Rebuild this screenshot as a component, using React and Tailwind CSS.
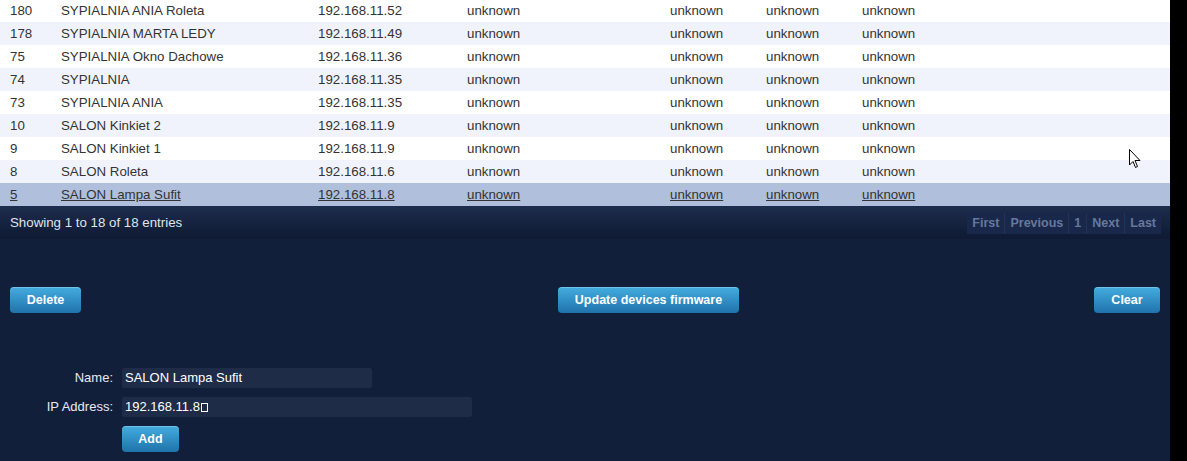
const rows = [
    { id: "180", name: "SYPIALNIA ANIA Roleta", ip: "192.168.11.52" },
    { id: "178", name: "SYPIALNIA MARTA LEDY", ip: "192.168.11.49" },
    { id: "75", name: "SYPIALNIA Okno Dachowe", ip: "192.168.11.36" },
    { id: "74", name: "SYPIALNIA", ip: "192.168.11.35" },
    { id: "73", name: "SYPIALNIA ANIA", ip: "192.168.11.35" },
    { id: "10", name: "SALON Kinkiet 2", ip: "192.168.11.9" },
    { id: "9", name: "SALON Kinkiet 1", ip: "192.168.11.9" },
    { id: "8", name: "SALON Roleta", ip: "192.168.11.6" },
    { id: "5", name: "SALON Lampa Sufit", ip: "192.168.11.8", selected: true },
];

const btn =
    "h-[26px] rounded-[4px] bg-gradient-to-b from-[#44ade0] to-[#1f73ab] text-white font-bold text-[12.5px] shadow-[inset_0_1px_0_rgba(255,255,255,0.25)]";

export default function App() {
    return (
        <div className="flex w-[1187px] h-[461px] overflow-hidden bg-black font-['Liberation_Sans',Arial,sans-serif]">
            <div className="relative w-[1170px] h-full bg-[#121f3b]">
                <div className="-mt-px">
                    {rows.map((r, i) => (
                        <div
                            key={r.id}
                            className={
                                "flex h-[23px] items-center text-[13.3px] text-[#333] " +
                                (r.selected
                                    ? "bg-[#b0bfdb] underline"
                                    : i % 2
                                    ? "bg-[#f1f3fc]"
                                    : "bg-white")
                            }
                        >
                            <span className="w-[61px] pl-[10px]">{r.id}</span>
                            <span className="w-[257px]">{r.name}</span>
                            <span className="w-[149px]">{r.ip}</span>
                            <span className="w-[203px]">unknown</span>
                            <span className="w-[96px]">unknown</span>
                            <span className="w-[96px]">unknown</span>
                            <span>unknown</span>
                        </div>
                    ))}
                </div>
                <div className="flex h-[33px] items-center justify-between px-[10px] pt-px bg-gradient-to-b from-[#1d2d4d] to-[#0f1a33]">
                    <span className="text-[13.3px] text-[#dfe5ee]">
                        Showing 1 to 18 of 18 entries
                    </span>
                    <div className="flex h-[21px] items-stretch bg-[#18274a] text-[12.5px] font-bold text-[#68789a] mr-[-1px]">
                        <span className="px-[5px] flex items-center border-r border-[#223355]">First</span>
                        <span className="px-[5px] flex items-center border-r border-[#223355]">Previous</span>
                        <span className="px-[5px] flex items-center border-r border-[#223355]">1</span>
                        <span className="px-[5px] flex items-center border-r border-[#223355]">Next</span>
                        <span className="px-[5px] flex items-center">Last</span>
                    </div>
                </div>
                <div className="flex px-[10px] pt-[48px]">
                    <button className={btn + " w-[71px]"}>Delete</button>
                    <button className={btn + " w-[181px] ml-[477px]"}>Update devices firmware</button>
                    <button className={btn + " w-[66px] ml-auto"}>Clear</button>
                </div>
                <div className="mt-[55px] grid grid-cols-[113px_auto] gap-x-[9px] gap-y-[9px] items-center text-[13px]">
                    <span className="text-right text-[#e6ebf3]">Name:</span>
                    <div className="w-[250px] h-[20px] rounded-[2px] bg-[#1e2c48] text-white pl-[3px] flex items-center">
                        SALON Lampa Sufit
                    </div>
                    <span className="text-right text-[#e6ebf3]">IP Address:</span>
                    <div className="w-[350px] h-[20px] rounded-[2px] bg-[#1e2c48] text-white pl-[3px] flex items-center">
                        192.168.11.8
                        <span className="inline-block w-[7px] h-[9px] border border-white ml-[1px]" />
                    </div>
                    <span />
                    <button className={btn + " w-[57px]"}>Add</button>
                </div>
                <svg
                    className="absolute left-[1129px] top-[149px]"
                    width="13"
                    height="20"
                    viewBox="0 0 13 20"
                >
                    <path
                        d="M0.5 0.5 L0.5 16 L4 12.5 L6.5 18.5 L8.5 17.5 L6 11.5 L11 11.5 Z"
                        fill="white"
                        stroke="black"
                        strokeWidth="1"
                    />
                </svg>
            </div>
            <div className="flex-1 bg-black" />
        </div>
    );
}
